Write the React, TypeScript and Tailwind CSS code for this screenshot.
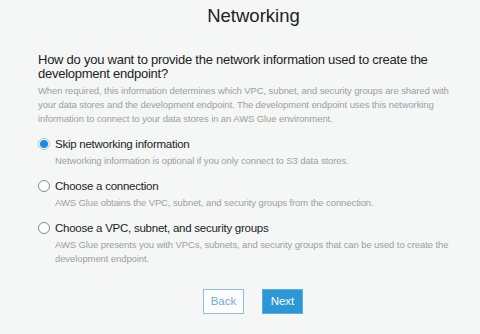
import React from "react";

const options = [
  { label: "Skip networking information", desc: "Networking information is optional if you only connect to S3 data stores.", checked: true },
  { label: "Choose a connection", desc: "AWS Glue obtains the VPC, subnet, and security groups from the connection.", checked: false },
  { label: "Choose a VPC, subnet, and security groups", desc: "AWS Glue presents you with VPCs, subnets, and security groups that can be used to create the development endpoint.", checked: false },
];

export default function App() {
  return (
    <div className="w-[480px] h-[334px] bg-[#f5f6f6] overflow-hidden" style={{ fontFamily: '"Liberation Sans", Arial, sans-serif' }}>
      <div className="pt-[5px] text-center text-[18.5px] leading-[22px] text-[#222] pl-[27px]">Networking</div>
      <div className="pl-[38px] pr-[28px] mt-[26px]">
        <div className="text-[13px] leading-[14px] text-[#222] tracking-[-0.25px]">How do you want to provide the network information used to create the development endpoint?</div>
        <div className="mt-[3px] text-[9.5px] leading-[14px] text-[#9e9e9e] tracking-[-0.1px]">When required, this information determines which VPC, subnet, and security groups are shared with your data stores and the development endpoint. The development endpoint uses this networking information to connect to your data stores in an AWS Glue environment.</div>
        <div className="mt-[10px] flex flex-col gap-[10px]">
          {options.map((o) => (
            <div key={o.label} className="flex gap-[5px]">
              <div className={`mt-[2px] w-[12px] h-[12px] rounded-full border shrink-0 flex items-center justify-center bg-white ${o.checked ? "border-[#b0bfcf]" : "border-[#8a8a8a]"}`}>
                {o.checked && <div className="w-[8px] h-[8px] rounded-full bg-[#1e88e5]" />}
              </div>
              <div>
                <div className="text-[11.5px] leading-[16px] text-[#222] tracking-[-0.25px]">{o.label}</div>
                <div className="mt-[2px] text-[9.5px] leading-[14px] text-[#9e9e9e] tracking-[-0.1px]">{o.desc}</div>
              </div>
            </div>
          ))}
        </div>
      </div>
      <div className="mt-[23px] flex justify-center gap-[18px] pl-[26px]">
        <button className="w-[41px] h-[25px] border border-[#8bbde8] bg-white text-[11.5px] text-[#74a8da]">Back</button>
        <button className="w-[41px] h-[25px] bg-[#2d97d6] border border-[#5aaee4] text-[11.5px] text-white">Next</button>
      </div>
    </div>
  );
}
